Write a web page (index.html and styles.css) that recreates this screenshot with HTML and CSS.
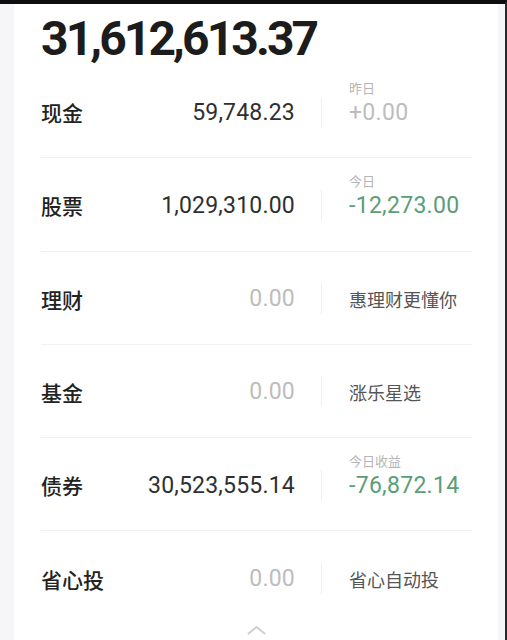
FILE: index.html
```html
<!DOCTYPE html>
<html lang="zh-CN">
<head>
<meta charset="utf-8">
<link rel="stylesheet" href="styles.css">
</head>
<body>
<div class="screen">
  <div class="card">
    <div class="total">31,612,613.37</div>
    <div class="row">
      <div class="label">现金</div>
      <div class="value">59,748.23</div>
      <div class="divider"></div>
      <div class="side"><span class="caption">昨日</span><span class="num muted">+0.00</span></div>
    </div>
    <div class="row">
      <div class="label">股票</div>
      <div class="value">1,029,310.00</div>
      <div class="divider"></div>
      <div class="side"><span class="caption">今日</span><span class="num down">-12,273.00</span></div>
    </div>
    <div class="row">
      <div class="label">理财</div>
      <div class="value muted">0.00</div>
      <div class="divider"></div>
      <div class="side"><span class="promo">惠理财更懂你</span></div>
    </div>
    <div class="row">
      <div class="label">基金</div>
      <div class="value muted">0.00</div>
      <div class="divider"></div>
      <div class="side"><span class="promo">涨乐星选</span></div>
    </div>
    <div class="row">
      <div class="label">债券</div>
      <div class="value">30,523,555.14</div>
      <div class="divider"></div>
      <div class="side"><span class="caption">今日收益</span><span class="num down">-76,872.14</span></div>
    </div>
    <div class="row last">
      <div class="label">省心投</div>
      <div class="value muted">0.00</div>
      <div class="divider"></div>
      <div class="side"><span class="promo">省心自动投</span></div>
    </div>
    <div class="collapse">
      <svg width="19" height="10" viewBox="0 0 19 10"><polyline points="1.5,8.5 9.5,2 17.5,8.5" fill="none" stroke="#cfcfcf" stroke-width="2" stroke-linecap="round" stroke-linejoin="round"/></svg>
    </div>
  </div>
</div>
</body>
</html>
```
FILE: styles.css
```css
html, body {
  margin: 0;
  padding: 0;
  height: 100%;
}
body {
  background: #f6f6f8;
  font-family: Roboto, "Noto Sans CJK SC", sans-serif;
  color: #222;
  overflow: hidden;
}
.screen {
  height: 636px;
  border-top: 4px solid #0d0d0d;
  border-right: 2px solid #2a2a2a;
  padding-left: 14px;
  padding-right: 7px;
  background: #f6f6f8;
}
.card {
  background: #fff;
  height: 100%;
  padding: 11px 26px 0 27px;
  box-sizing: border-box;
}
.total {
  font-family: Roboto, sans-serif;
  font-weight: 700;
  font-size: 48px;
  line-height: 48px;
  letter-spacing: -2.9px;
  color: #1c1c1c;
  margin-bottom: 2px;
}
.row {
  display: flex;
  align-items: center;
  height: 93.25px;
  padding-top: 2px;
  box-sizing: border-box;
  border-bottom: 1px solid #f1f1f1;
}
.row.last {
  border-bottom: none;
}
.label {
  flex: none;
  width: 100px;
  font-family: "Noto Sans CJK SC", sans-serif;
  font-size: 21px;
  font-weight: 500;
  color: #222;
}
.value {
  flex: none;
  width: 154px;
  text-align: right;
  font-family: Roboto, sans-serif;
  font-size: 23px;
  color: #2f2f2f;
  letter-spacing: 0.2px;
}
.divider {
  flex: none;
  width: 1px;
  height: 31px;
  background: #f0f0f0;
  margin: 0 27px 0 26px;
}
.side {
  position: relative;
  display: flex;
  align-items: center;
}
.caption {
  position: absolute;
  left: 0;
  bottom: 100%;
  margin-bottom: 4px;
  font-family: "Noto Sans CJK SC", sans-serif;
  font-size: 13px;
  line-height: 14px;
  color: #b5b5b5;
  white-space: nowrap;
}
.num {
  font-family: Roboto, sans-serif;
  font-size: 23px;
  letter-spacing: 0.3px;
}
.muted {
  color: #bdbdbd;
}
.down {
  color: #5b9d77;
}
.promo {
  font-family: "Noto Sans CJK SC", sans-serif;
  font-size: 18px;
  color: #555;
}
.collapse {
  display: flex;
  justify-content: center;
}
```
